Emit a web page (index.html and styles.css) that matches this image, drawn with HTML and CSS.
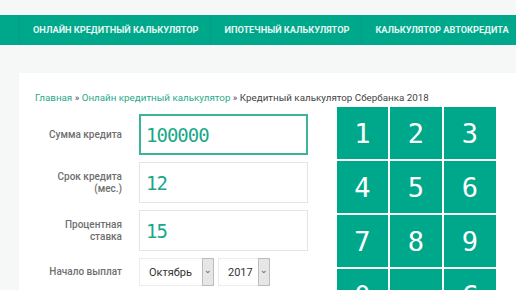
FILE: index.html
```html
<!DOCTYPE html>
<html>
<head>
    <meta charset="UTF-8">
    <title>Кредитный калькулятор Сбербанка 2018</title>
    <link rel="stylesheet" href="styles.css">
</head>
<body>

<!-- верхнее меню -->
<div class="menu">
    <a class="menu_item" href="#">Онлайн кредитный калькулятор</a>
    <a class="menu_item" href="#">Ипотечный калькулятор</a>
    <a class="menu_item" href="#">Калькулятор автокредита</a>
</div>

<div class="box">
    <div class="crumbs">
        <a href="#">Главная</a> » <a href="#">Онлайн кредитный калькулятор</a> » Кредитный калькулятор Сбербанка 2018
    </div>

    <div class="calc">
        <form class="calc_form">
            <div class="row">
                <label class="lbl">Сумма кредита</label>
                <input class="num active" type="text" name="sum" value="100000">
            </div>
            <div class="row">
                <label class="lbl">Срок кредита (мес.)</label>
                <input class="num" type="text" name="term" value="12">
            </div>
            <div class="row">
                <label class="lbl">Процентная ставка</label>
                <input class="num" type="text" name="rate" value="15">
            </div>
            <div class="row small">
                <label class="lbl">Начало выплат</label>
                <div class="sel sel_month">
                    <select name="month">
                        <option>Октябрь</option>
                    </select>
                    <span class="arrow">&#8964;</span>
                </div>
                <div class="sel sel_year">
                    <select name="year">
                        <option>2017</option>
                    </select>
                    <span class="arrow">&#8964;</span>
                </div>
            </div>
        </form>

        <!-- цифровая клавиатура -->
        <div class="keys">
            <button class="key">1</button>
            <button class="key">2</button>
            <button class="key">3</button>
            <button class="key">4</button>
            <button class="key">5</button>
            <button class="key">6</button>
            <button class="key">7</button>
            <button class="key">8</button>
            <button class="key">9</button>
            <button class="key">0</button>
            <button class="key">,</button>
            <button class="key">C</button>
        </div>
    </div>
</div>

</body>
</html>
```

FILE: styles.css
```css
body{
    margin: 0;
    background: #f6f7f7;
    font-family: Roboto, "Liberation Sans", sans-serif;
    font-size: 10px;
    overflow: hidden;
}
.menu{
    margin-top: 15px;
    height: 30px;
    background: #00a88b;
    padding-left: 19px;
    display: flex;
    white-space: nowrap;
    overflow: hidden;
}
.menu_item{
    display: block;
    line-height: 30px;
    padding: 0 12px 0 13px;
    border-left: 1px solid #0d9a80;
    color: #e3f6f1;
    font-size: 9.2px;
    font-weight: bold;
    text-transform: uppercase;
    text-decoration: none;
}
.box{
    margin: 28px 0 0 19px;
    background: white;
    padding: 18px 0 0 16px;
    height: 300px;
}
.crumbs{
    color: #444;
    font-size: 9.8px;
    line-height: 14px;
    white-space: nowrap;
}
.crumbs a{
    color: #2aa98b;
    text-decoration: none;
}
.calc{
    display: flex;
    margin-top: 2px;
}
.calc_form{
    width: 273px;
    margin: 7px 29px 0 0;
}
.row{
    display: flex;
    align-items: center;
    height: 41px;
    margin-bottom: 7px;
}
.row.small{
    height: 28px;
}
.lbl{
    width: 87px;
    margin-right: 17px;
    text-align: right;
    color: #6f6f6f;
    line-height: 12px;
    font-weight: 500;
}
.num{
    width: 169px;
    height: 41px;
    box-sizing: border-box;
    border: 1px solid #e4e4e4;
    padding: 0 0 0 6px;
    outline: none;
    font-family: "DejaVu Sans Mono", monospace;
    font-size: 19px;
    letter-spacing: -1px;
    color: #1aa88a;
}
.num.active{
    border: 2px solid #3bb596;
    padding-left: 5px;
}
.sel{
    display: flex;
    height: 28px;
    box-sizing: border-box;
    border: 1px solid #ececec;
    margin-right: 4px;
}
.sel_month{ width: 75px;}
.sel_year{ width: 52px;}
.sel select{
    flex: 1;
    min-width: 0;
    appearance: none;
    -webkit-appearance: none;
    border: none;
    background: white;
    outline: none;
    padding-left: 9px;
    font-family: Roboto, "Liberation Sans", sans-serif;
    font-size: 11px;
    color: #333;
}
.arrow{
    width: 10px;
    margin: -1px -1px -1px 0;
    background: #e6e6e6;
    border: 1px solid #bdbdbd;
    color: #555;
    font-size: 9px;
    line-height: 22px;
    text-align: center;
}
.keys{
    display: grid;
    grid-template-columns: 51px 52px 52px;
    grid-auto-rows: 52px;
    gap: 2px;
}
.key{
    border: none;
    padding: 0;
    background: #00a88b;
    color: white;
    font-family: "DejaVu Sans Mono", monospace;
    font-size: 27px;
}
```
